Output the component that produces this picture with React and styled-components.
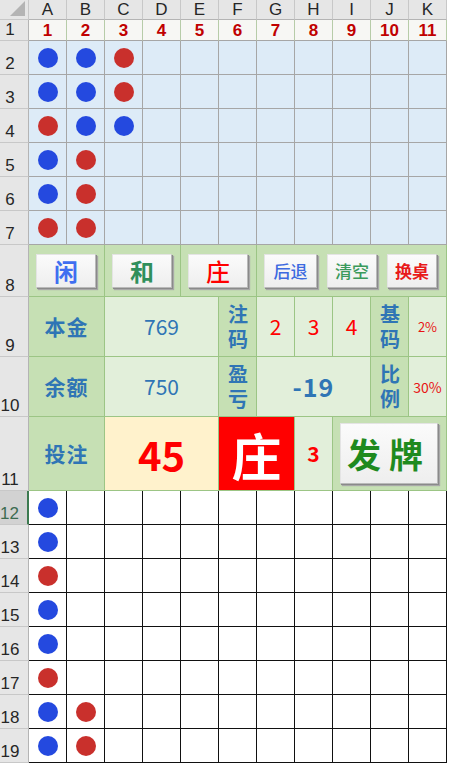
import React from "react";
import styled, { createGlobalStyle } from "styled-components";

const GlobalStyle = createGlobalStyle`
  html, body {
    margin: 0;
    padding: 0;
    background: #ffffff;
  }
  body {
    font-family: "Noto Sans CJK SC", "Noto Sans", sans-serif;
  }
`;

const BLUE = "#2449df";
const RED = "#c9302c";
const DARK = "#c6e0b4";
const LIGHT = "#e2efda";
const GREEN_LINE = "#9cc585";

const Sheet = styled.div`
  display: grid;
  grid-template-columns: 29px repeat(11, 38px);
  grid-template-rows: 20px 21px repeat(6, 34px) 52px 60px 60px 74px repeat(8, 34px);
  width: 447px;
`;

const Cell = styled.div`
  box-sizing: border-box;
  grid-column: ${({ $c }) => $c} / span ${({ $s }) => $s || 1};
  grid-row: ${({ $r }) => $r} / span ${({ $rs }) => $rs || 1};
  background: ${({ $bg }) => $bg || "#ffffff"};
  border-right: 1px solid ${({ $line }) => $line || "#a6a6a6"};
  border-bottom: 1px solid ${({ $line }) => $line || "#a6a6a6"};
  display: flex;
  align-items: center;
  justify-content: center;
  overflow: hidden;
  line-height: 1;
`;

const Corner = styled(Cell)`
  background: #e6e6e6;
  border-color: #c8c8c8;
  justify-content: flex-end;
  align-items: flex-end;
  padding: 0 3px 3px 0;
`;

const Triangle = styled.span`
  width: 0;
  height: 0;
  border-left: 15px solid transparent;
  border-bottom: 15px solid #b4b4b4;
`;

const ColHead = styled(Cell)`
  background: #e6e6e6;
  border-right-color: #c8c8c8;
  border-bottom-color: #b4b4b4;
  color: #262626;
  font-family: "Liberation Sans", Arial, sans-serif;
  font-size: 17px;
`;

const RowHead = styled(Cell)`
  background: ${({ $active }) => ($active ? "#d2d2d2" : "#e6e6e6")};
  color: ${({ $active }) => ($active ? "#3d6b50" : "#262626")};
  border-bottom-color: #c8c8c8;
  border-right: ${({ $active }) => ($active ? "2px solid #3c7a50" : "1px solid #b4b4b4")};
  align-items: flex-end;
  justify-content: center;
  padding: 0 8px 2px 0;
  font-family: "Liberation Sans", Arial, sans-serif;
  font-size: 17px;
`;

const NumCell = styled(Cell)`
  background: #f7f7f4;
  border-right-color: #b7cca8;
  border-bottom-color: #a6a6a6;
  color: #c00000;
  font-family: "Liberation Sans", Arial, sans-serif;
  font-size: 17px;
  font-weight: 700;
`;

const Bead = styled.span`
  width: 20px;
  height: 20px;
  border-radius: 50%;
  background: ${({ $color }) => $color};
`;

const Label = styled(Cell)`
  background: ${DARK};
  border-color: ${GREEN_LINE};
  color: #2f75b5;
  font-weight: 700;
  font-size: 21px;
  letter-spacing: 1px;
`;

const VerticalText = styled.span`
  writing-mode: vertical-rl;
  font-size: 20px;
  letter-spacing: 5px;
  line-height: 1;
  padding-top: 5px;
`;

const Value = styled(Cell)`
  background: ${({ $bg }) => $bg || LIGHT};
  border-color: ${GREEN_LINE};
  color: ${({ $color }) => $color || "#2f75b5"};
  font-size: ${({ $size }) => $size || "21px"};
  font-weight: ${({ $weight }) => $weight || 400};
  letter-spacing: ${({ $spacing }) => $spacing || "0"};
`;

const ButtonCell = styled(Cell)`
  background: ${DARK};
  border-color: ${GREEN_LINE};
  justify-content: flex-start;
  padding-left: 7px;
  gap: ${({ $gap }) => $gap || "0px"};
`;

const SheetButton = styled.button`
  box-sizing: border-box;
  width: ${({ $w }) => $w};
  height: ${({ $h }) => $h || "34px"};
  margin: 0;
  padding: 0;
  border: 1px solid #b9b9b9;
  border-top-color: #e4e4e4;
  border-left-color: #e4e4e4;
  background: linear-gradient(#fbfbfb, #eeeeee);
  box-shadow: 1px 1px 0 #8a8a8a, 2px 2px 1px #a8a8a8;
  color: ${({ $color }) => $color};
  font-family: "Noto Sans CJK SC", sans-serif;
  font-size: ${({ $size }) => $size};
  font-weight: ${({ $weight }) => $weight || 700};
  letter-spacing: ${({ $spacing }) => $spacing || "0"};
  line-height: 1;
  display: flex;
  align-items: center;
  justify-content: center;
`;

const LogCell = styled(Cell)`
  border-right: 1px solid #111;
  border-bottom: 1px solid #111;
`;

const cols = ["A", "B", "C", "D", "E", "F", "G", "H", "I", "J", "K"];

const topBeads = [
  ["b", "b", "r"],
  ["b", "b", "r"],
  ["r", "b", "b"],
  ["b", "r"],
  ["b", "r"],
  ["r", "r"],
];

const logBeads = [
  ["b"],
  ["b"],
  ["r"],
  ["b"],
  ["b"],
  ["r"],
  ["b", "r"],
  ["b", "r"],
];

const beadColor = (k) => (k === "b" ? BLUE : RED);

export default function App() {
  return (
    <>
      <GlobalStyle />
      <Sheet>
        <Corner $c={1} $r={1}>
          <Triangle />
        </Corner>
        {cols.map((l, i) => (
          <ColHead key={l} $c={i + 2} $r={1}>
            {l}
          </ColHead>
        ))}

        <RowHead $c={1} $r={2}>1</RowHead>
        {cols.map((l, i) => (
          <NumCell key={"n" + l} $c={i + 2} $r={2}>
            {i + 1}
          </NumCell>
        ))}

        {topBeads.map((row, ri) => (
          <React.Fragment key={"t" + ri}>
            <RowHead $c={1} $r={ri + 3}>{ri + 2}</RowHead>
            {cols.map((l, ci) => (
              <Cell key={l} $c={ci + 2} $r={ri + 3} $bg="#ddebf7">
                {row[ci] && <Bead $color={beadColor(row[ci])} />}
              </Cell>
            ))}
          </React.Fragment>
        ))}

        <RowHead $c={1} $r={9}>8</RowHead>
        <ButtonCell $c={2} $s={2} $r={9}>
          <SheetButton $w="60px" $size="24px" $color="#3f6ff0">闲</SheetButton>
        </ButtonCell>
        <ButtonCell $c={4} $s={2} $r={9}>
          <SheetButton $w="60px" $size="24px" $color="#2f8f5b">和</SheetButton>
        </ButtonCell>
        <ButtonCell $c={6} $s={2} $r={9}>
          <SheetButton $w="60px" $size="24px" $color="#ff0000" $weight={500}>庄</SheetButton>
        </ButtonCell>
        <ButtonCell $c={8} $s={5} $r={9} $gap="10px">
          <SheetButton $w="53px" $size="17px" $color="#3d6ae0" $weight={500}>后退</SheetButton>
          <SheetButton $w="50px" $size="17px" $color="#3a9a5c" $weight={500}>清空</SheetButton>
          <SheetButton $w="50px" $size="17px" $color="#e81a1a">换桌</SheetButton>
        </ButtonCell>

        <RowHead $c={1} $r={10}>9</RowHead>
        <Label $c={2} $s={2} $r={10}>本金</Label>
        <Value $c={4} $s={3} $r={10}>769</Value>
        <Label $c={7} $r={10}>
          <VerticalText>注码</VerticalText>
        </Label>
        <Value $c={8} $r={10} $color="#ff0000">2</Value>
        <Value $c={9} $r={10} $color="#ff0000">3</Value>
        <Value $c={10} $r={10} $color="#ff0000">4</Value>
        <Label $c={11} $r={10}>
          <VerticalText>基码</VerticalText>
        </Label>
        <Value $c={12} $r={10} $color="#e81414" $size="13px">2%</Value>

        <RowHead $c={1} $r={11}>10</RowHead>
        <Label $c={2} $s={2} $r={11}>余额</Label>
        <Value $c={4} $s={3} $r={11}>750</Value>
        <Label $c={7} $r={11}>
          <VerticalText>盈亏</VerticalText>
        </Label>
        <Value $c={8} $s={3} $r={11} $size="25px" $weight={600} $spacing="1px">-19</Value>
        <Label $c={11} $r={11}>
          <VerticalText>比例</VerticalText>
        </Label>
        <Value $c={12} $r={11} $color="#e81414" $size="14px">30%</Value>

        <RowHead $c={1} $r={12}>11</RowHead>
        <Label $c={2} $s={2} $r={12}>投注</Label>
        <Value $c={4} $s={3} $r={12} $bg="#fff2cc" $color="#ff0000" $size="40px" $weight={700}>
          45
        </Value>
        <Value $c={7} $s={2} $r={12} $bg="#ff0000" $color="#ffffff" $size="50px" $weight={700}>
          庄
        </Value>
        <Value $c={9} $r={12} $color="#ff0000" $size="21px" $weight={700}>3</Value>
        <ButtonCell $c={10} $s={3} $r={12}>
          <SheetButton $w="98px" $h="61px" $size="34px" $color="#1f8a1f" $spacing="8px">
            发牌
          </SheetButton>
        </ButtonCell>

        {logBeads.map((row, ri) => (
          <React.Fragment key={"l" + ri}>
            <RowHead $c={1} $r={ri + 13} $active={ri === 0}>{ri + 12}</RowHead>
            {cols.map((l, ci) => (
              <LogCell key={l} $c={ci + 2} $r={ri + 13}>
                {row[ci] && <Bead $color={beadColor(row[ci])} />}
              </LogCell>
            ))}
          </React.Fragment>
        ))}
      </Sheet>
    </>
  );
}
